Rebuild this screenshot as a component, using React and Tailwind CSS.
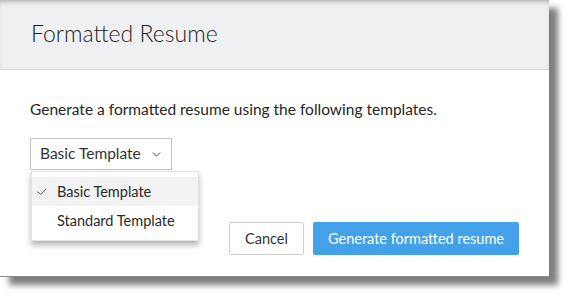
import { Check, ChevronDown } from 'lucide-react'

export default function App() {
  const options = ['Basic Template', 'Standard Template']
  const selected = 'Basic Template'

  return (
    <div className="w-[570px] h-[297px] bg-white overflow-hidden" style={{ fontFamily: 'Lato, "Open Sans", sans-serif' }}>
      <div className="w-[549px] h-[277px] bg-white border-b border-[#8a8a8a] shadow-[9px_8px_6px_rgba(0,0,0,0.5)] flex flex-col">
        <header className="h-[70px] shrink-0 bg-[#eff0f2] border-b border-[#d6d7d9] shadow-[inset_0_4px_4px_-2px_rgba(0,0,0,0.25)] flex items-center pl-[31px] pb-[3px]">
          <h1 className="text-[23px] font-light text-[#1e1e1e]">Formatted Resume</h1>
        </header>

        <main className="flex-1 flex flex-col px-[30px] pt-[29px]">
          <p className="text-[15.5px] text-[#262626] leading-[20px]">
            Generate a formatted resume using the following templates.
          </p>

          <div className="relative mt-[19px] w-[142px]">
            <button className="w-[142px] h-[32px] border border-[#c4c4c4] bg-white flex items-center pl-[9px] pr-[8px] text-[15.5px] text-[#333]">
              <span>Basic Template</span>
              <ChevronDown className="ml-auto w-[13px] h-[13px] text-[#444]" strokeWidth={1.8} />
            </button>

            <ul className="absolute left-[1px] top-[33px] w-[168px] bg-white border border-[#e2e2e2] shadow-[0_4px_6px_rgba(0,0,0,0.3)] py-[5px] z-10">
              {options.map((opt) => (
                <li
                  key={opt}
                  className={`h-[29px] flex items-center pl-[25px] relative text-[14.5px] text-[#2a2a2a] ${
                    opt === selected ? 'bg-[#f3f3f3]' : ''
                  }`}
                >
                  {opt === selected && (
                    <Check className="absolute left-[4px] w-[12px] h-[12px] text-[#333]" strokeWidth={1.6} />
                  )}
                  {opt}
                </li>
              ))}
            </ul>
          </div>

          <div className="flex justify-end gap-[9px] mt-[52px]">
            <button className="w-[75px] h-[33px] rounded-[2px] border border-[#cfcfcf] bg-white text-[14.5px] text-[#333]">
              Cancel
            </button>
            <button className="w-[206px] h-[33px] rounded-[2px] bg-[#43a1ea] text-[14.5px] text-white">
              Generate formatted resume
            </button>
          </div>
        </main>
      </div>
    </div>
  )
}
